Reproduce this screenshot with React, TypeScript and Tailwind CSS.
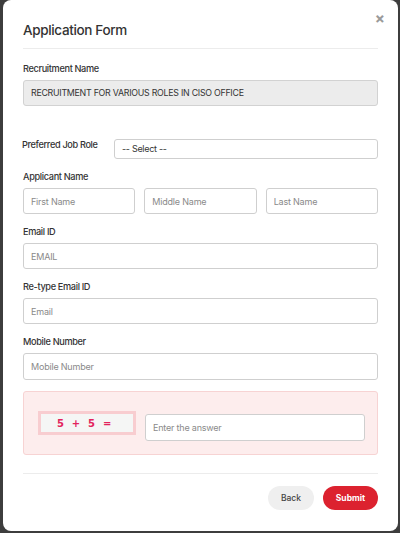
import React from "react";

export default function App() {
  const font = { fontFamily: "Inter, 'Liberation Sans', sans-serif" };
  const inputCls =
    "block h-[26px] w-full rounded-[3px] border border-[#cfcfcf] bg-white px-[7px] text-[9px] text-[#333] placeholder:text-[#8a8a8a] outline-none tracking-[-0.2px]";
  const labelCls = "block text-[9.2px] leading-[12px] font-medium text-[#333] tracking-[-0.35px]";
  return (
    <div className="h-[533px] w-[400px] overflow-hidden bg-[#3d3d3d]" style={font}>
      <div className="ml-[3px] h-[531px] w-[395px] rounded-[8px] bg-white">
        <div className="relative px-[20px]">
          <div className="flex h-[49px] items-center border-b border-[#ececec] pt-[12px]">
            <h1 className="text-[13.5px] font-medium text-[#333] tracking-[-0.35px]">Application Form</h1>
          </div>
          <button className="absolute right-[13px] top-[11px] text-[15px] font-bold leading-none text-[#9a9a9a]">
            ×
          </button>
          <div className="pt-[14px]">
            <div className={labelCls}>Recruitment Name</div>
            <div className="mt-[5px] flex h-[26px] items-center rounded-[3px] border border-[#d2d2d2] bg-[#ececec] px-[7px] text-[8.8px] text-[#333] tracking-[-0.25px]">
              RECRUITMENT FOR VARIOUS ROLES IN CISO OFFICE
            </div>
          </div>
          <div className="mt-[33px] flex items-start">
            <div className={`${labelCls} -ml-[1px] w-[92px]`}>Preferred Job Role</div>
            <div className="flex h-[20px] flex-1 items-center rounded-[3px] border border-[#cfcfcf] px-[7px] text-[9px] text-[#333] tracking-[-0.3px]">
              -- Select --
            </div>
          </div>
          <div className="mt-[12px]">
            <div className={labelCls}>Applicant Name</div>
            <div className="mt-[5px] grid grid-cols-3 gap-[9px]">
              <input className={inputCls} placeholder="First Name" />
              <input className={inputCls} placeholder="Middle Name" />
              <input className={inputCls} placeholder="Last Name" />
            </div>
          </div>
          <div className="mt-[12px]">
            <div className={labelCls}>Email ID</div>
            <input className={`${inputCls} mt-[5px]`} placeholder="EMAIL" />
          </div>
          <div className="mt-[12px]">
            <div className={labelCls}>Re-type Email ID</div>
            <input className={`${inputCls} mt-[5px]`} placeholder="Email" />
          </div>
          <div className="mt-[12px]">
            <div className={labelCls}>Mobile Number</div>
            <input className={`${inputCls} mt-[5px] h-[27px]`} placeholder="Mobile Number" />
          </div>
          <div className="mt-[11px] flex h-[64px] items-center gap-[9px] rounded-[3px] border border-[#f7d3d3] bg-[#fdeded] pl-[14px] pr-[12px]">
            <div className="flex h-[24px] w-[98px] shrink-0 items-center border-[3px] border-[#f8cdd0] bg-[#f5f6f5] pl-[16px]">
              <span
                className="text-[10px] font-bold tracking-[2.2px] text-[#e2245c]"
                style={{ fontFamily: "'DejaVu Sans', Verdana, sans-serif" }}
              >
                5&nbsp;+&nbsp;5&nbsp;=
              </span>
            </div>
            <input className={`${inputCls} mt-[8px] h-[27px] border-[#cdbcbc]`} placeholder="Enter the answer" />
          </div>
          <div className="mt-[18px] flex justify-end gap-[9px] border-t border-[#ececec] pt-[12px]">
            <button className="h-[24px] w-[46px] rounded-full bg-[#efefef] text-[8.5px] font-medium text-[#444]">
              Back
            </button>
            <button className="h-[24px] w-[55px] rounded-full bg-[#dc222f] text-[8.5px] font-bold text-white">
              Submit
            </button>
          </div>
        </div>
      </div>
    </div>
  );
}
